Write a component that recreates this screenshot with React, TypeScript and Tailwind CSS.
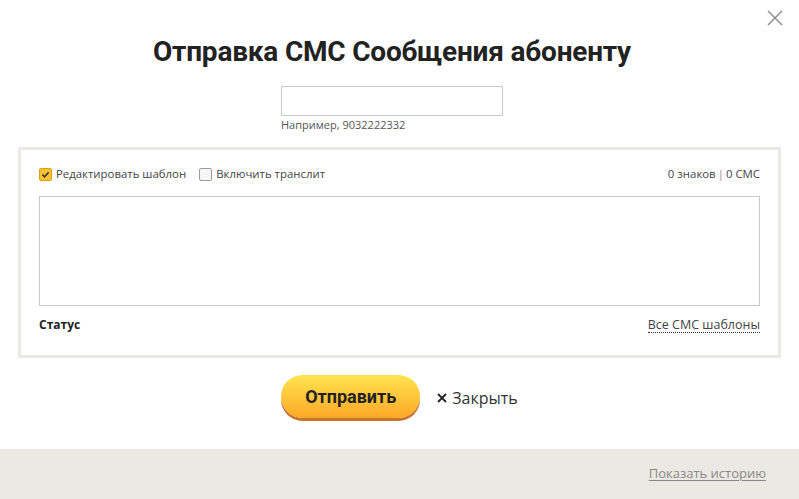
import React, { useState } from 'react';

const App: React.FC = () => {
  const [editTemplate, setEditTemplate] = useState(true);
  const [translit, setTranslit] = useState(false);
  const [text, setText] = useState('');

  return (
    <div className="relative w-full h-[499px] bg-white flex flex-col font-['Open_Sans',sans-serif] text-[#333]">
      {/* close */}
      <button className="absolute top-[10px] right-[16px] w-[16px] h-[16px] text-[#888]">
        <svg viewBox="0 0 16 16" width="16" height="16" stroke="currentColor" strokeWidth="1.4" fill="none">
          <path d="M1 1 L15 15 M15 1 L1 15" />
        </svg>
      </button>

      <div className="flex flex-col items-center pr-[15px] pt-[35px]">
        <h1 className="font-['Roboto',sans-serif] font-bold text-[28px] leading-[34px] text-[#222] tracking-[-0.2px]">
          Отправка СМС Сообщения абоненту
        </h1>
        <div className="mt-[17px] w-[222px]">
          <input
            autoFocus
            className="w-full h-[30px] border border-[#c8c8c8] px-[5px] text-[14px] outline-none caret-black"
          />
          <div className="mt-[2px] text-[11px] leading-[14px] text-[#555]">Например, 9032222332</div>
        </div>
      </div>

      {/* panel */}
      <div className="mx-[18px] mt-[15px] border-[3px] border-[#ece9e4] px-[18px] pt-[16px] pb-[21px]">
        <div className="flex items-center justify-between h-[16px] text-[11.4px]">
          <div className="flex items-center">
            <label className="flex items-center cursor-pointer">
              <span
                onClick={() => setEditTemplate(!editTemplate)}
                className={`w-[13px] h-[13px] rounded-[2px] border flex items-center justify-center ${editTemplate ? 'bg-[#fcc22e] border-[#d9a020]' : 'bg-[#f4f4f4] border-[#9a9a9a]'}`}
              >
                {editTemplate && (
                  <svg viewBox="0 0 10 10" width="9" height="9" fill="none" stroke="#333" strokeWidth="1.8">
                    <path d="M1.5 5 L4 7.5 L8.5 2.5" />
                  </svg>
                )}
              </span>
              <span className="ml-[4px] text-[#444]">Редактировать шаблон</span>
            </label>
            <label className="flex items-center ml-[13px] cursor-pointer">
              <span
                onClick={() => setTranslit(!translit)}
                className={`w-[13px] h-[13px] rounded-[2px] border ${translit ? 'bg-[#fcc22e] border-[#d9a020]' : 'bg-[#f6f6f6] border-[#9a9a9a]'}`}
              />
              <span className="ml-[4px] text-[#444]">Включить транслит</span>
            </label>
          </div>
          <div className="text-[#444]">
            {text.length} знаков<span className="text-[#b07aa0] mx-[2px]">|</span>0 СМС
          </div>
        </div>
        <textarea
          value={text}
          onChange={(e) => setText(e.target.value)}
          className="block w-full h-[110px] mt-[14px] border border-[#c8c8c8] resize-none outline-none p-[6px] text-[13px]"
        />
        <div className="flex items-center justify-between mt-[10px] h-[18px] text-[12px]">
          <span className="font-bold text-[#222]">Статус</span>
          <a href="#" className="text-[12.5px] text-[#444] border-b border-dotted border-[#333] leading-[15px]">Все СМС шаблоны</a>
        </div>
      </div>

      {/* actions */}
      <div className="flex items-center justify-center gap-[17px] mt-[17px]">
        <button className="w-[139px] h-[43px] rounded-full bg-gradient-to-b from-[#ffe44d] to-[#fba826] shadow-[0_3px_0_#c9742e] font-['Roboto',sans-serif] font-bold text-[18px] text-[#222]">
          Отправить
        </button>
        <button className="flex items-center text-[16px] text-[#333] mt-[2px]">
          <svg viewBox="0 0 10 10" width="10" height="10" stroke="#222" strokeWidth="1.8" className="mr-[5px]">
            <path d="M1 1 L9 9 M9 1 L1 9" />
          </svg>
          Закрыть
        </button>
      </div>

      <div className="mt-auto h-[50px] bg-[#ece9e4] flex items-center justify-end pr-[33px]">
        <a href="#" className="text-[13px] text-[#888] underline underline-offset-2">Показать историю</a>
      </div>
    </div>
  );
};

export default App;
